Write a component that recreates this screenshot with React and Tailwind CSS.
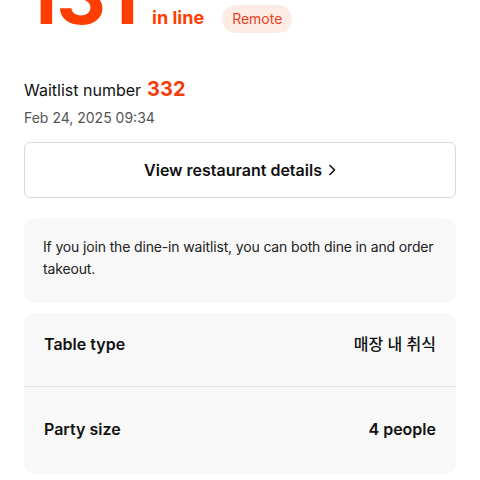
export default function App() {
  return (
    <div className="w-[480px] h-[480px] overflow-hidden bg-white px-6 font-['Inter','Noto_Sans_CJK_KR',sans-serif] text-[#111]">
      <div className="flex items-baseline -mt-[42px]">
        <span className="text-[77px] font-bold leading-none tracking-[-1px] text-[#ff3d00]">131</span>
        <span className="ml-[15px] text-lg font-bold text-[#ff3d00]">in line</span>
        <span className="ml-[18px] inline-flex h-7 items-center rounded-full bg-[#fdece6] px-[10px] text-sm text-[#ea4220]">Remote</span>
      </div>
      <div className="mt-[40px] flex items-baseline">
        <span className="text-base">Waitlist number</span>
        <span className="ml-1.5 text-xl font-bold text-[#f23c0d]">332</span>
      </div>
      <div className="mt-[5px] text-sm text-[#555]">Feb 24, 2025 09:34</div>
      <button className="mt-[14px] flex h-[56px] w-full items-center justify-center rounded-md border border-[#d8d8d8] bg-white text-base font-semibold text-[#111]">
        View restaurant details
        <svg className="ml-1.5" width="8" height="12" viewBox="0 0 8 12" fill="none">
          <path d="M2 1.5 6.5 6 2 10.5" stroke="#111" strokeWidth="1.6" strokeLinecap="round" strokeLinejoin="round" />
        </svg>
      </button>
      <div className="mt-5 rounded-xl bg-[#f8f8f8] pl-[19px] pr-3 pt-[18px] pb-[23px] text-sm leading-[22px] tracking-[-0.15px] text-[#222]">
        If you join the dine-in waitlist, you can both dine in and order takeout.
      </div>
      <div className="mt-[10px] rounded-xl bg-[#f8f8f8]">
        <div className="flex items-center justify-between px-5 pt-[19px] pb-[30px] border-b border-[#e6e6e6]">
          <span className="text-base font-semibold leading-6">Table type</span>
          <span className="text-base font-medium leading-6">매장 내 취식</span>
        </div>
        <div className="flex items-center justify-between px-5 pt-[30px] pb-[33px]">
          <span className="text-base font-semibold leading-6">Party size</span>
          <span className="text-base font-semibold leading-6">4 people</span>
        </div>
      </div>
    </div>
  );
}
